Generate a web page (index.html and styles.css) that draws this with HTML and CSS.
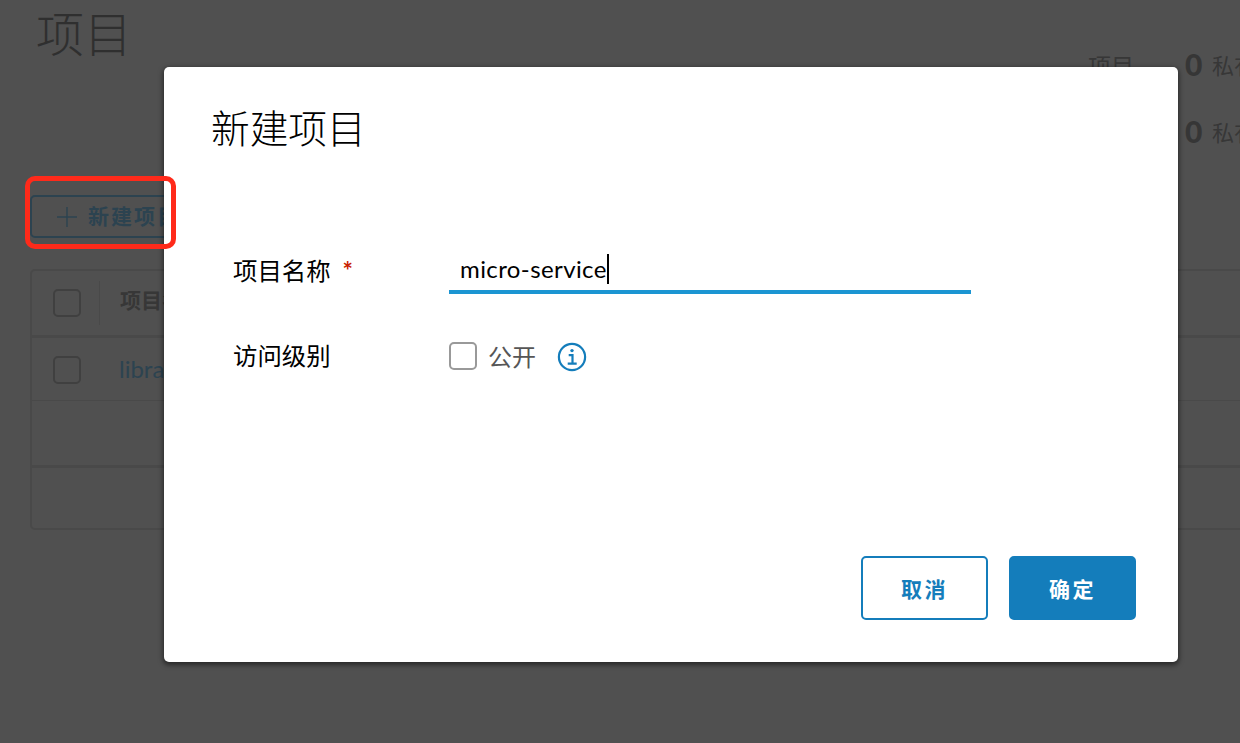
FILE: index.html
```html
<!DOCTYPE html>
<html lang="zh-CN">
<head>
<meta charset="utf-8">
<title>项目</title>
<link rel="stylesheet" href="styles.css">
</head>
<body>
<main class="page">
  <header class="page-head">
    <h1 class="page-title">项目</h1>
    <div class="stats">
      <div class="stat"><span class="stat-label">项目</span><b class="stat-num">0</b><span class="stat-kind">私有</span></div>
      <div class="stat"><span class="stat-label"></span><b class="stat-num">0</b><span class="stat-kind">私有</span></div>
    </div>
  </header>
  <button class="new-btn">
    <svg class="plus" viewBox="0 0 20 20"><path d="M10 0v20M0 10h20"/></svg>
    <span>新建项目</span>
  </button>
  <section class="grid">
    <div class="row row-head"><span class="check-cell"><i class="box"></i></span><span class="cell">项目名称</span></div>
    <div class="row row-item"><span class="check-cell"><i class="box"></i></span><a class="cell link">library</a></div>
    <div class="row row-empty"></div>
    <div class="row row-foot"></div>
  </section>
</main>

<div class="modal" role="dialog">
  <h2 class="modal-title">新建项目</h2>
  <div class="form">
    <div class="field">
      <label class="label">项目名称<span class="star">*</span></label>
      <div class="input"><span class="value">micro-service</span><i class="caret"></i></div>
    </div>
    <div class="field field-access">
      <label class="label">访问级别</label>
      <i class="box box-form"></i>
      <span class="public">公开</span>
      <svg class="info" viewBox="0 0 30 30"><circle cx="15" cy="15" r="13.1"/><path d="M11.7 13.1h3.8v8M10.7 21.7h9"/><circle class="dot" cx="15" cy="8.6" r="1.7"/></svg>
    </div>
  </div>
  <footer class="actions">
    <button class="btn">取消</button>
    <button class="btn btn-primary">确定</button>
  </footer>
</div>
<div class="marker"></div>
</body>
</html>
```

FILE: styles.css
```css
* { box-sizing: border-box; }
body {
  margin: 0;
  width: 1240px;
  height: 743px;
  overflow: hidden;
  position: relative;
  background: #505050;
  font-family: "Lato", "Noto Sans CJK SC", sans-serif;
}
h1, h2 { margin: 0; }
button { font-family: inherit; margin: 0; }
i { display: block; }

.page { padding-left: 30px; }
.page-head { display: flex; justify-content: space-between; height: 195px; }
.page-title {
  padding: 1px 0 0 6px;
  font: 300 48px/60px "Noto Sans CJK SC", sans-serif;
  color: #2f2f2f;
}
.stats { width: 152px; padding-top: 44px; }
.stat {
  display: flex;
  align-items: center;
  height: 40px;
  margin-bottom: 27px;
  white-space: nowrap;
  color: #373737;
}
.stat-label { flex: none; width: 97px; padding-top: 4px; font-size: 23px; line-height: 40px; }
.stat-num { flex: none; width: 27px; font: 900 30px/40px "Lato", sans-serif; color: #363636; }
.stat-kind { flex: none; padding-top: 4px; font-size: 22px; line-height: 40px; }

.new-btn {
  display: flex;
  align-items: center;
  gap: 11px;
  width: 168px;
  height: 43px;
  padding: 0 0 0 25px;
  border: 2px solid #2c4350;
  border-radius: 5px;
  background: none;
  color: #2c4350;
  font-size: 21px;
  font-weight: 700;
  letter-spacing: 2px;
  white-space: nowrap;
  line-height: 38px;
}
.new-btn span { padding-bottom: 1px; }
.plus { flex: none; width: 20px; height: 20px; fill: none; stroke: #2c4350; stroke-width: 1.4; }

.grid {
  height: 261px;
  margin: 31px -10px 0 0;
  border: 2px solid #494949;
  border-radius: 5px;
}
.row { display: flex; align-items: center; border-bottom: 1px solid #494949; }
.row-head { height: 67px; border-bottom: 3px solid #494949; }
.row-item { height: 63px; }
.row-empty { height: 67px; border-bottom: 3px solid #494949; }
.row-foot { height: 60px; border: 0; }
.check-cell { width: 68px; height: 44px; padding: 8px 0 0 21px; border-right: 1px solid #494949; }
.row-item .check-cell { padding-top: 9px; border-color: transparent; }
.box { width: 28px; height: 28px; border: 2px solid #404040; border-radius: 5px; }
.cell { padding: 0 0 8px 20px; font-size: 21px; font-weight: 700; color: #373737; }
.link { padding: 0 0 2px 19px; font-size: 24px; font-weight: 400; color: #2c4350; }

.modal {
  position: absolute;
  left: 164px;
  top: 67px;
  width: 1014px;
  height: 595px;
  padding: 32px 42px 42px 47px;
  display: flex;
  flex-direction: column;
  border-radius: 5px;
  background: #fff;
  box-shadow: 0 2px 5px 1px rgba(0, 0, 0, 0.5);
}
.modal-title { font: 300 38.7px/54px "Noto Sans CJK SC", sans-serif; color: #000; }
.form { flex: 1; padding: 95px 0 0 22px; }
.field { display: flex; height: 46px; }
.label { width: 216px; font-size: 24.4px; line-height: 45px; color: #000; }
.star { margin-left: 12px; color: #c92100; font-weight: 700; }
.input {
  display: flex;
  align-items: center;
  width: 522px;
  height: 46px;
  padding: 0 0 0 11px;
  border-bottom: 4px solid #1b95d2;
}
.value { font-size: 24px; line-height: 36px; padding-bottom: 1px; letter-spacing: 0.4px; color: #000; }
.caret { width: 2px; height: 30px; background: #000; }
.field-access { margin-top: 39px; align-items: center; }
.field-access .label { padding-bottom: 2px; line-height: 41px; }
.box-form { border-color: #999; }
.public { margin-left: 11px; padding-top: 1px; font-size: 24px; line-height: 45px; color: #565656; }
.info { width: 30px; height: 30px; margin: 2px 0 0 21px; fill: none; stroke: #147dbb; stroke-width: 2.2; }
.info .dot { fill: #147dbb; stroke: none; }

.actions { display: flex; justify-content: flex-end; gap: 21px; }
.btn {
  width: 127px;
  height: 64px;
  padding: 0;
  border: 2px solid #147dbb;
  border-radius: 5px;
  background: #fff;
  color: #147dbb;
  font-size: 21px;
  font-weight: 700;
  letter-spacing: 2.4px;
}
.btn-primary { background: #147dbb; color: #fff; }

.marker {
  position: absolute;
  left: 25px;
  top: 176px;
  width: 151px;
  height: 73px;
  border: 5px solid #ff2a1a;
  border-radius: 10px;
}
```
